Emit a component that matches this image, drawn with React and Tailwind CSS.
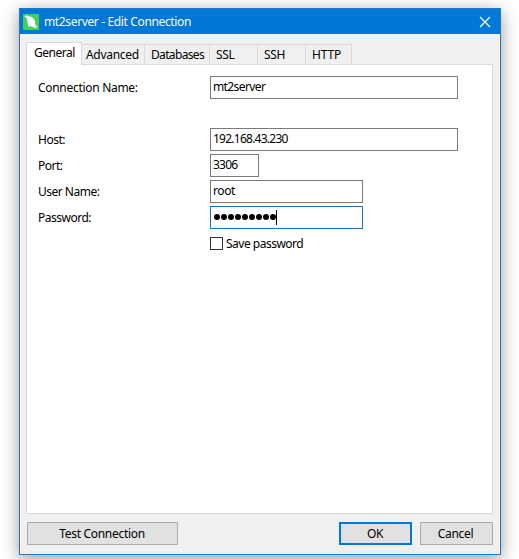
import clsx from 'clsx'

const TABS = [
  { label: 'Advanced', className: 'w-[63px] pl-1 tracking-[-0.3px]' },
  { label: 'Databases', className: 'w-[65px] pl-[6px] tracking-[-0.65px]' },
  { label: 'SSL', className: 'w-12 pl-[6px] tracking-[-0.4px]' },
  { label: 'SSH', className: 'w-12 pl-[6px] tracking-[-0.4px]' },
  { label: 'HTTP', className: 'w-[46px] pl-[6px] tracking-[-0.2px]' },
]

const FIELDS = [
  { label: 'Host:', value: '192.168.43.230', className: 'w-[248px] tracking-[-0.75px]' },
  { label: 'Port:', value: '3306', className: 'w-[49px] tracking-[-0.75px]' },
  { label: 'User Name:', value: 'root', className: 'w-[153px] tracking-[-0.4px]' },
]

function DolphinIcon() {
  return (
    <svg className="h-4 w-4" viewBox="0 0 16 16">
      <rect width="16" height="16" fill="#3fd158" />
      <path
        d="M1.4 2.2C2.8 1.2 4.4 1.4 5.8 2.2C8.8 2.4 11.4 4.4 12 7.4C12.3 9 12.3 10.4 13 11.6L15 13.4L12.8 13.2L11.4 14.6L10.6 13.2C9.2 13.2 8 12.6 7 11.8L6 13.4L5 11L4.8 9.4C4.2 8 4.4 6 3.8 4.6L1.4 2.2Z"
        fill="#fff"
      />
    </svg>
  )
}

function TitleBar() {
  return (
    <div className="flex h-[25px] items-center bg-[#0078d7] pl-[3px] pr-[9px] text-white">
      <DolphinIcon />
      <span className="ml-[5px] flex-1 tracking-[-0.36px]">mt2server - Edit Connection</span>
      <svg className="h-3 w-3" viewBox="0 0 12 12" fill="none" stroke="currentColor" strokeWidth="1.2">
        <path d="M1 1L11 11M11 1L1 11" />
      </svg>
    </div>
  )
}

function Field({ label, labelClassName = 'tracking-[-0.5px]', value, className, focused }) {
  return (
    <div className="flex h-[23px] items-center">
      <span className={clsx('w-[172px]', labelClassName)}>{label}</span>
      <div
        className={clsx(
          'flex h-[23px] items-center border pb-px pl-[2px]',
          focused ? 'border-[#1a71bd]' : 'border-[#7a7a7a]',
          className,
        )}
      >
        {value}
      </div>
    </div>
  )
}

function PasswordValue() {
  return (
    <>
      {/* masked characters, then the caret */}
      <span className="ml-px flex gap-px">
        {Array.from({ length: 9 }, (_, i) => (
          <span key={i} className="h-1.5 w-1.5 rounded-full bg-black" />
        ))}
      </span>
      <span className="h-[15px] w-px bg-black" />
    </>
  )
}

function Button({ children, className }) {
  return (
    <button className={clsx('flex h-[23px] items-center justify-center bg-[#e1e1e1]', className)}>
      {children}
    </button>
  )
}

export default function App() {
  return (
    <div className="h-[559px] w-[519px] overflow-hidden bg-white pl-[19px] pt-2 font-['Noto_Sans','Open_Sans',sans-serif] text-[12px] leading-4 text-black">
      <div className="flex h-[547px] w-[482px] flex-col border border-[#2878bd] bg-[#f0f0f0] shadow-[0_4px_16px_rgba(0,0,0,0.4)]">
        <TitleBar />

        <div className="flex flex-1 flex-col px-[6px] pt-2">
          {/* Tabs */}
          <div className="z-10 -mb-px flex h-[23px] items-end">
            <div className="h-[23px] w-14 border border-b-0 border-[#d9d9d9] bg-white pl-[7px] pt-[2px] tracking-[-0.5px]">
              General
            </div>
            {TABS.map(tab => (
              <div
                key={tab.label}
                className={clsx('h-[21px] border-b border-r border-t border-[#d9d9d9] pt-[2px]', tab.className)}
              >
                {tab.label}
              </div>
            ))}
          </div>

          <div className="h-[450px] w-[467px] border border-[#d9d9d9] bg-white pl-[11px] pt-[11px]">
            <Field
              label="Connection Name:"
              labelClassName="tracking-[-0.3px]"
              value="mt2server"
              className="w-[248px] tracking-[-0.6px]"
            />
            <div className="mt-[29px] flex flex-col gap-[3px]">
              {FIELDS.map(field => (
                <Field key={field.label} {...field} />
              ))}
              <Field label="Password:" value={<PasswordValue />} className="w-[153px]" focused />
            </div>
            <label className="ml-[172px] mt-[7px] flex items-center">
              <span className="-mt-px h-[13px] w-[13px] border border-[#333] bg-white" />
              <span className="ml-[3px] tracking-[-0.5px]">Save password</span>
            </label>
          </div>

          {/* Actions */}
          <div className="mt-2 flex w-[467px] pl-px">
            <Button className="w-[151px] border border-[#adadad] pr-px tracking-[-0.3px]">Test Connection</Button>
            <Button className="ml-[161px] w-[73px] border-2 border-[#0078d7] pr-px tracking-[-0.3px]">OK</Button>
            <Button className="ml-2 w-[73px] border border-[#adadad] pr-[2px] tracking-[-0.3px]">Cancel</Button>
          </div>
        </div>
      </div>
    </div>
  )
}
